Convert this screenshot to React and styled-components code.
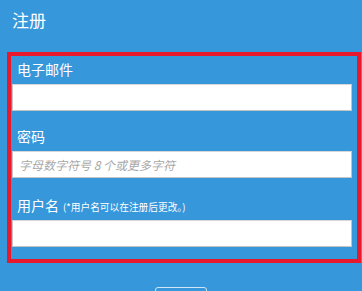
import React from "react";
import styled, { createGlobalStyle } from "styled-components";

const Global = createGlobalStyle`
  html, body {
    margin: 0;
    padding: 0;
    background: #3697db;
  }
  body {
    font-family: "Noto Sans CJK SC", "Noto Sans", sans-serif;
    overflow: hidden;
  }
`;

const Page = styled.div`
  width: 362px;
  height: 291px;
  overflow: hidden;
  background: #3697db;
  color: #ffffff;
  display: flex;
  flex-direction: column;
`;

const Title = styled.h1`
  margin: 0;
  padding-left: 12px;
  height: 40px;
  line-height: 40px;
  font-size: 17px;
  font-weight: 400;
`;

const FormBox = styled.form`
  margin: 12px 1px 0 7px;
  border: 4px solid #e8192c;
  padding: 3px 5px 12px 1px;
  display: flex;
  flex-direction: column;
`;

const Field = styled.div`
  display: flex;
  flex-direction: column;
  margin-top: ${(p) => p.$top || 0}px;
`;

const Label = styled.label`
  display: block;
  padding-left: 5px;
  height: 20px;
  line-height: 20px;
  font-size: 14px;
  margin-bottom: 5px;
  white-space: nowrap;
`;

const Note = styled.span`
  font-size: 9.7px;
  margin-left: 4px;
`;

const Input = styled.input`
  box-sizing: border-box;
  width: 100%;
  height: 27px;
  margin: 0;
  padding: 0 6px;
  background: #ffffff;
  border: 1px solid #c4c4c4;
  border-top-color: #d6d6d6;
  border-radius: 0;
  outline: none;
  font-family: "Noto Sans CJK SC", "Noto Sans", sans-serif;
  font-size: 12px;
  color: #333;
  &::placeholder {
    color: #a8a8a8;
    font-style: italic;
  }
`;

const ButtonRow = styled.div`
  display: flex;
  justify-content: center;
  margin-top: 24px;
`;

const Button = styled.button`
  width: 52px;
  height: 30px;
  background: #3697db;
  border: 1px solid #cfe4f5;
  border-radius: 3px;
  color: #fff;
  font-family: "Noto Sans CJK SC", "Noto Sans", sans-serif;
  font-size: 13px;
  padding: 8px 0 0;
  line-height: 20px;
`;

export default function App() {
  return (
    <Page>
      <Global />
      <Title>注册</Title>
      <FormBox onSubmit={(e) => e.preventDefault()}>
        <Field>
          <Label>电子邮件</Label>
          <Input type="email" />
        </Field>
        <Field $top={15}>
          <Label>密码</Label>
          <Input type="password" placeholder="字母数字符号 8 个或更多字符" />
        </Field>
        <Field $top={17}>
          <Label>
            用户名<Note>(*用户名可以在注册后更改。)</Note>
          </Label>
          <Input type="text" />
        </Field>
      </FormBox>
      <ButtonRow>
        <Button type="submit">注册</Button>
      </ButtonRow>
    </Page>
  );
}
